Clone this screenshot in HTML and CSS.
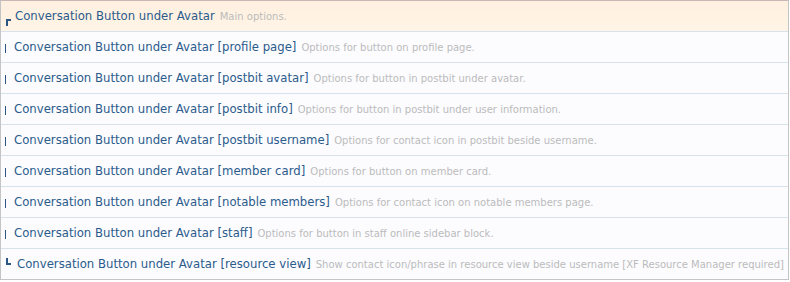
FILE: index.html
```html
<!DOCTYPE html>
<html lang="en">
<head>
    <meta charset="UTF-8">
    <title>Option groups</title>
    <link rel="stylesheet" href="styles.css">
</head>
<body>

    <ul class="option-list">
        <li class="option-row first">
            <span class="tree"></span>
            <a href="#" class="option-title">Conversation Button under Avatar</a>
            <span class="option-desc">Main options.</span>
        </li>
        <li class="option-row">
            <span class="tree"></span>
            <a href="#" class="option-title">Conversation Button under Avatar [profile page]</a>
            <span class="option-desc">Options for button on profile page.</span>
        </li>
        <li class="option-row">
            <span class="tree"></span>
            <a href="#" class="option-title">Conversation Button under Avatar [postbit avatar]</a>
            <span class="option-desc">Options for button in postbit under avatar.</span>
        </li>
        <li class="option-row">
            <span class="tree"></span>
            <a href="#" class="option-title">Conversation Button under Avatar [postbit info]</a>
            <span class="option-desc">Options for button in postbit under user information.</span>
        </li>
        <li class="option-row">
            <span class="tree"></span>
            <a href="#" class="option-title">Conversation Button under Avatar [postbit username]</a>
            <span class="option-desc">Options for contact icon in postbit beside username.</span>
        </li>
        <li class="option-row">
            <span class="tree"></span>
            <a href="#" class="option-title">Conversation Button under Avatar [member card]</a>
            <span class="option-desc">Options for button on member card.</span>
        </li>
        <li class="option-row">
            <span class="tree"></span>
            <a href="#" class="option-title">Conversation Button under Avatar [notable members]</a>
            <span class="option-desc">Options for contact icon on notable members page.</span>
        </li>
        <li class="option-row">
            <span class="tree"></span>
            <a href="#" class="option-title">Conversation Button under Avatar [staff]</a>
            <span class="option-desc">Options for button in staff online sidebar block.</span>
        </li>
        <li class="option-row last">
            <span class="tree"></span>
            <a href="#" class="option-title">Conversation Button under Avatar [resource view]</a>
            <span class="option-desc">Show contact icon/phrase in resource view beside username [XF Resource Manager required]</span>
        </li>
    </ul>

</body>
</html>
```

FILE: styles.css
```css
body {
    margin: 0;
    background: #ffffff;
    font-family: 'DejaVu Sans', sans-serif;
}

.option-list {
    list-style: none;
    margin: 0;
    padding: 0;
    width: 787px;
    height: 278px;
    border: 1px solid #c4c4c4;
    border-top-color: #c9b8b8;
    overflow: hidden;
}

.option-row {
    display: flex;
    align-items: center;
    height: 30px;
    padding-left: 3px;
    background: #fcfcff;
    border-bottom: 1px solid #d7e3ec;
    white-space: nowrap;
}

.option-row.first {
    background: linear-gradient(180deg, #fff0e0, #fff4e6);
}

/* tree markers */
.tree {
    display: block;
    width: 1px;
    height: 9px;
    margin: 2px 8px 0 1px;
    background: #2b5582;
}

.first .tree,
.last .tree {
    width: 3px;
    height: 5px;
    background: none;
    border-left: 2px solid #2b5582;
}

.first .tree {
    border-top: 2px solid #2b5582;
    margin: 12px 4px 0 2px;
}

.last .tree {
    border-bottom: 2px solid #2b5582;
    margin: 0 6px 6px 2px;
}

.option-title {
    color: #2b5b8b;
    font-size: 11.7px;
    text-decoration: none;
}

.option-desc {
    color: #bbbbbb;
    font-size: 10px;
    margin-left: 5px;
}
```
